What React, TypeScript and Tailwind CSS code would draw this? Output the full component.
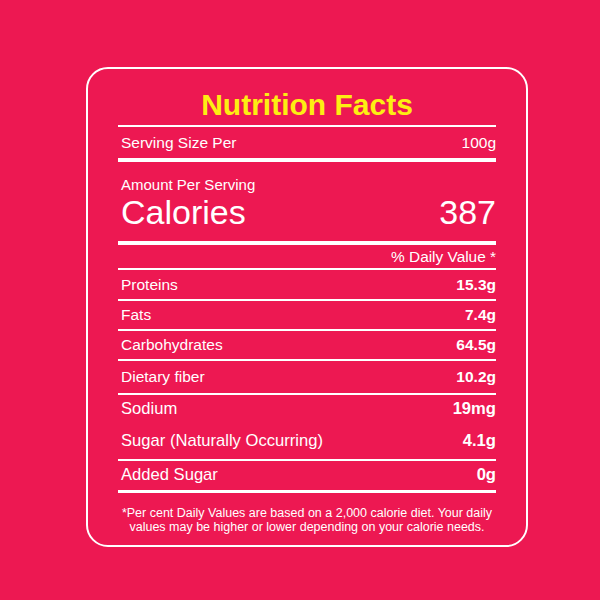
import React from 'react';

interface Row {
  label: string;
  value: string;
  h: string;
  big?: boolean;
  line?: boolean;
}

const rows: Row[] = [
  { label: 'Proteins', value: '15.3g', h: 'h-[29px]', line: true },
  { label: 'Fats', value: '7.4g', h: 'h-[28px]', line: true },
  { label: 'Carbohydrates', value: '64.5g', h: 'h-[28px]', line: true },
  { label: 'Dietary fiber', value: '10.2g', h: 'h-[32px]', line: true },
  { label: 'Sodium', value: '19mg', h: 'h-[28px]', big: true },
  { label: 'Sugar (Naturally Occurring)', value: '4.1g', h: 'h-[36px]', big: true, line: true },
  { label: 'Added Sugar', value: '0g', h: 'h-[29px]', big: true },
];

const Thin = () => <div className="h-[2px] bg-white" />;
const Thick = ({ h = 'h-[4px]' }: { h?: string }) => <div className={`${h} bg-white`} />;

export default function App() {
  return (
    <div
      className="w-[600px] h-[600px] bg-[#ed1852] pt-[67px] pl-[86px] text-white"
      style={{ fontFamily: '"Liberation Sans", Arial, sans-serif' }}
    >
      <div className="w-[442px] border-2 border-white rounded-[22px] px-[30px] pt-[18px] pb-[11px]">
        {/* 标题 */}
        <h1 className="text-center text-[30px] leading-[36px] font-bold text-[#fdee12] mb-[2px]">
          Nutrition Facts
        </h1>
        <Thin />
        <div className="h-[31px] flex items-center justify-between pl-[3px] text-[15.5px]">
          <span>Serving Size Per</span>
          <span>100g</span>
        </div>
        <Thick />
        <div className="pt-[14px] pb-[11px] pl-[3px]">
          <div className="text-[15px] leading-[18px]">Amount Per Serving</div>
          <div className="flex justify-between text-[34px] leading-[36px]">
            <span>Calories</span>
            <span>387</span>
          </div>
        </div>
        <Thick />
        <div className="h-[23px] flex items-center justify-end text-[15.4px]">% Daily Value *</div>
        <Thin />
        {rows.map(r => (
          <React.Fragment key={r.label}>
            <div
              className={`${r.h} flex items-center justify-between pl-[3px] ${r.big ? 'text-[16.6px]' : 'text-[15.5px]'}`}
            >
              <span>{r.label}</span>
              <span className="font-bold">{r.value}</span>
            </div>
            {r.line && <Thin />}
          </React.Fragment>
        ))}
        <Thick h="h-[3px]" />
        <p className="mt-[13px] text-center text-[12.5px] leading-[14px]">
          *Per cent Daily Values are based on a 2,000 calorie diet. Your daily values may be higher or lower
          depending on your calorie needs.
        </p>
      </div>
    </div>
  );
}
